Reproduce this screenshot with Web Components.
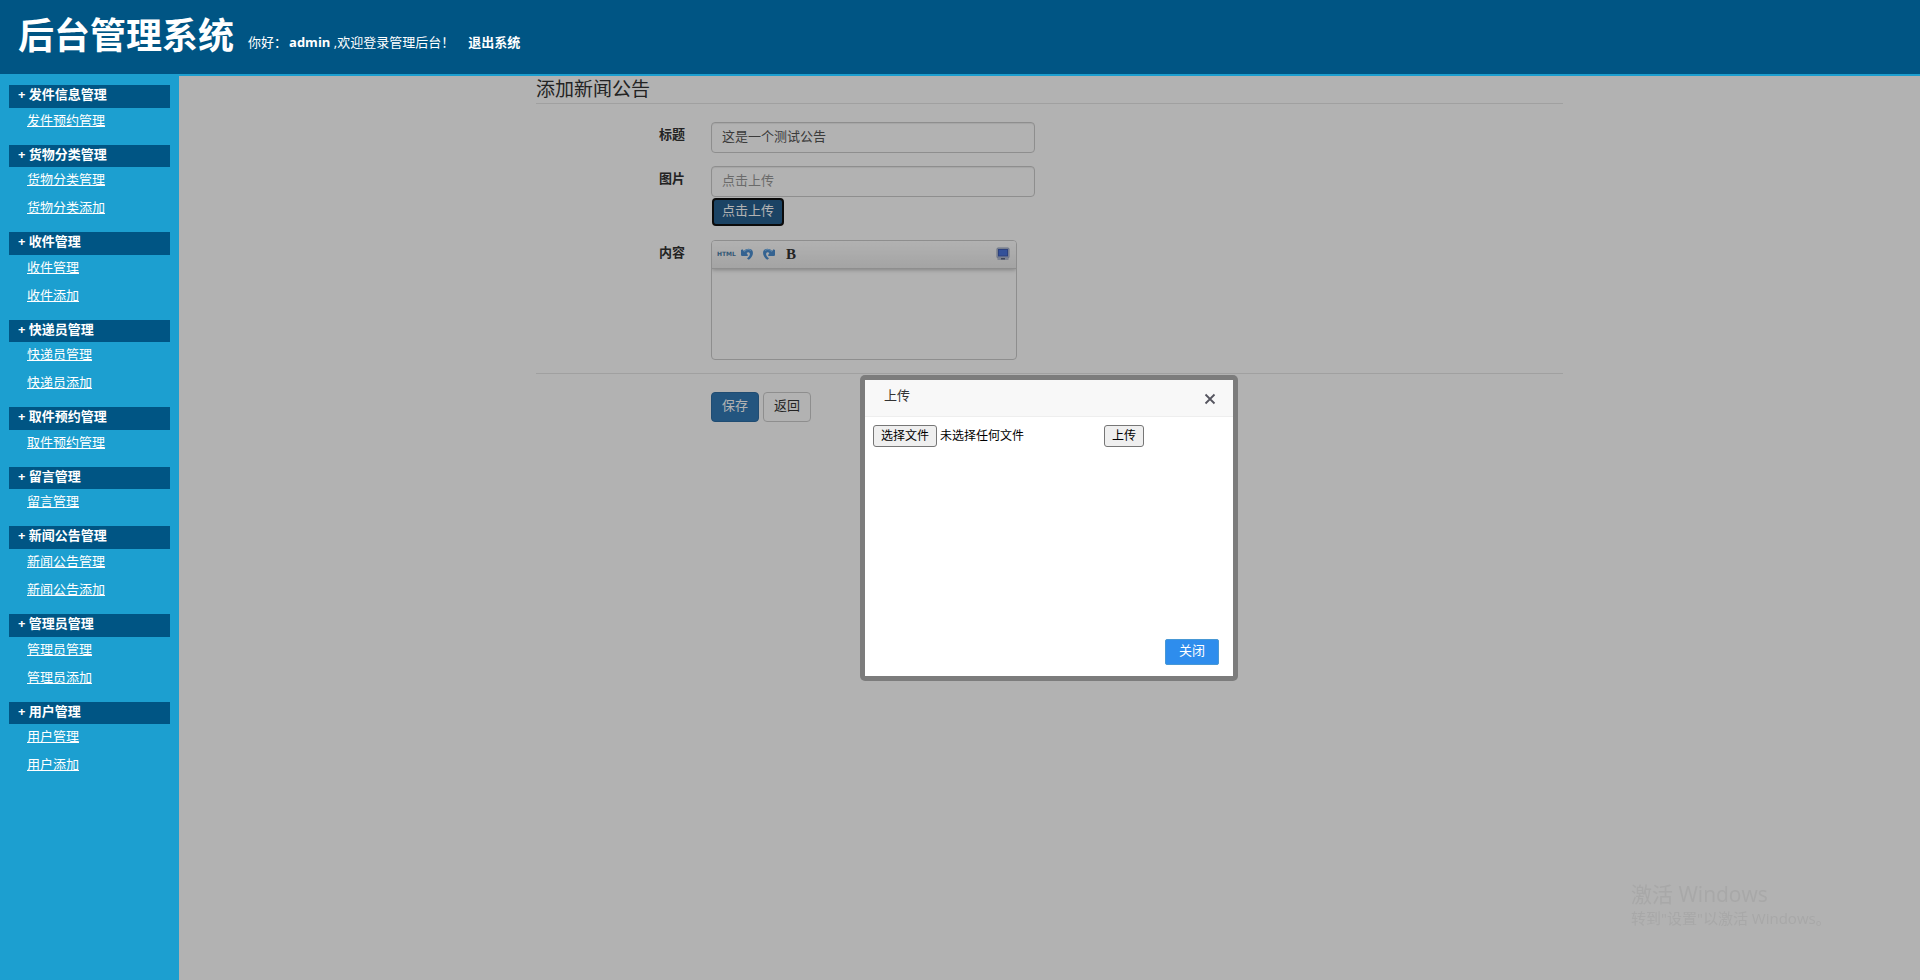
<!DOCTYPE html>
<html lang="zh-CN">
<head>
<meta charset="utf-8">
<title>后台管理系统</title>
<style>
  body {
    margin: 0;
    font-family: "Open Sans", "Noto Sans CJK SC", sans-serif;
    font-size: 13px;
    line-height: 1.43;
    color: #333;
  }
</style>
</head>
<body>
<admin-app></admin-app>

<script>
const define = (name, html, setup) => {
  const template = document.createElement("template");
  template.innerHTML = html;

  customElements.define(name, class extends HTMLElement {
    constructor() {
      super();
      this.attachShadow({ mode: "open" });
      this.shadowRoot.appendChild(template.content.cloneNode(true));
    }

    connectedCallback() {
      if (setup) setup(this, this.shadowRoot);
    }
  });
};

define("admin-header", `
  <style>
    :host {
      display: flex;
      align-items: center;
      height: 74px;
      padding: 0 18px;
      background: #005584;
      border-bottom: 2px solid #1c9fd0;
      color: #fff;
    }
    h1 {
      margin: 0 14px 2px 0;
      font-size: 36px;
      line-height: 72px;
    }
    p { margin: 10px 0 0; }
    b { margin-left: 2px; }
    a {
      margin-left: 14px;
      color: #fff;
      font-weight: bold;
      text-decoration: none;
    }
  </style>
  <h1>后台管理系统</h1>
  <p>你好：<b>admin</b> ,欢迎登录管理后台！<a href="#logout">退出系统</a></p>
`);

define("menu-group", `
  <style>
    :host {
      display: block;
      margin-bottom: 9px;
    }
    h2 {
      margin: 0;
      padding: 0 9px 4px;
      font-size: 13px;
      line-height: 1.43;
      background: #005584;
    }
    ::slotted(a) {
      display: block;
      padding: 0 0 4px 18px;
      line-height: 24px;
      color: #fff;
    }
  </style>
  <h2></h2>
  <slot></slot>
`, (el, root) => {
  root.querySelector("h2").textContent = "+ " + el.getAttribute("heading");
});

define("side-menu", `
  <style>
    :host {
      display: block;
      box-sizing: border-box;
      flex: 0 0 179px;
      padding: 9px;
      background: #1c9fd0;
      color: #fff;
    }
  </style>
  <nav></nav>
`, (el, root) => {
  const menu = {
    "发件信息管理": ["发件预约管理"],
    "货物分类管理": ["货物分类管理", "货物分类添加"],
    "收件管理": ["收件管理", "收件添加"],
    "快递员管理": ["快递员管理", "快递员添加"],
    "取件预约管理": ["取件预约管理"],
    "留言管理": ["留言管理"],
    "新闻公告管理": ["新闻公告管理", "新闻公告添加"],
    "管理员管理": ["管理员管理", "管理员添加"],
    "用户管理": ["用户管理", "用户添加"],
  };
  root.querySelector("nav").innerHTML = Object.entries(menu).map(([heading, links]) => `
    <menu-group heading="${heading}">
      ${links.map((text) => `<a href="#${text}">${text}</a>`).join("")}
    </menu-group>
  `).join("");
});

define("form-row", `
  <style>
    :host {
      display: grid;
      grid-template-columns: 175px 1fr;
      margin-bottom: 13px;
    }
    .label {
      padding: 3px 26px 0 0;
      text-align: right;
      font-weight: bold;
      line-height: 19px;
    }
  </style>
  <div class="label"><slot name="label"></slot></div>
  <div><slot></slot></div>
`);

define("text-editor", `
  <style>
    :host {
      display: flex;
      flex-direction: column;
      box-sizing: border-box;
      max-width: 306px;
      height: 120px;
      border: 1px solid #ccc;
      border-radius: 4px;
      overflow: hidden;
    }
    .toolbar {
      display: flex;
      align-items: center;
      gap: 6px;
      height: 25px;
      padding: 0 5px 2px;
      border-bottom: 1px solid #ccc;
      background: linear-gradient(#fff, #ebebeb);
      box-shadow: 0 1px 4px #bbb;
    }
    button {
      width: 16px;
      height: 16px;
      padding: 0;
      border: 0;
      background: none;
      line-height: 16px;
    }
    button:last-child { margin-left: auto; }
    svg { display: block; }
    .html {
      color: #4a7ea8;
      font: bold 6px/16px "DejaVu Sans", sans-serif;
    }
    .bold {
      color: #333;
      font: bold 15px/16px "Liberation Serif", serif;
    }
    textarea {
      flex: 1;
      padding: 6px;
      border: 0;
      outline: 0;
      background: none;
      resize: none;
      font: inherit;
    }
  </style>
  <div class="toolbar">
    <button class="html" type="button">HTML</button>
    <button type="button" aria-label="撤销">
      <svg width="16" height="16" viewBox="0 0 16 16">
        <path d="M2 4l1.500-.8 1.300 1.700C7 2.500 10 2.200 12 3.200c3.200 2 2.400 7.400-2.200 10.600L8 12.400c2.200-1.600 3.200-3.400 2.800-5-.5-1.400-1.800-1.600-3.200-.4L9 9.200 8.400 10H2.800L2 9.200z" fill="#4c8fd0"/>
        <path d="M5 5.600C7.500 3 10.500 3 12 4.600" fill="none" stroke="#84bdf0" stroke-width="1.200"/>
      </svg>
    </button>
    <button type="button" aria-label="重做">
      <svg width="16" height="16" viewBox="0 0 16 16">
        <g transform="matrix(-1 0 0 1 16 0)">
          <path d="M2 4l1.500-.8 1.300 1.700C7 2.500 10 2.200 12 3.200c3.200 2 2.400 7.400-2.200 10.600L8 12.400c2.200-1.600 3.200-3.400 2.800-5-.5-1.400-1.800-1.600-3.200-.4L9 9.200 8.400 10H2.800L2 9.200z" fill="#4c8fd0"/>
          <path d="M5 5.600C7.500 3 10.500 3 12 4.600" fill="none" stroke="#84bdf0" stroke-width="1.200"/>
        </g>
      </svg>
    </button>
    <button class="bold" type="button">B</button>
    <button type="button" aria-label="全屏">
      <svg width="16" height="16" viewBox="0 0 16 16">
        <rect x="2" y="2" width="12" height="10" rx="1" fill="#c3cadb" stroke="#93a0be"/>
        <rect x="3.500" y="3.500" width="9" height="6.500" fill="#4a74dc" stroke="#3f5db4"/>
        <path d="M2.500 12h11v2h-11z" fill="#b4bccf"/>
        <path d="M6 12h4v1.500H6z" fill="#5b6580"/>
      </svg>
    </button>
  </div>
  <textarea aria-label="内容"></textarea>
`);

define("news-form", `
  <style>
    :host {
      display: block;
      width: 59%;
      margin: 0 auto;
    }
    h2 {
      margin: 0 0 18px;
      border-bottom: 1px solid #e5e5e5;
      font-size: 19px;
      font-weight: normal;
      line-height: 27px;
    }
    input {
      display: block;
      box-sizing: border-box;
      width: 100%;
      max-width: 324px;
      height: 31px;
      padding: 0 10px 4px;
      border: 1px solid #ccc;
      border-radius: 4px;
      box-shadow: inset 0 1px 1px rgba(0, 0, 0, .075);
      color: #555;
      font: inherit;
    }
    input::placeholder { color: #999; }
    button {
      height: 30px;
      padding: 0 10px 4px;
      border: 1px solid #ccc;
      border-radius: 4px;
      background: #fff;
      color: #333;
      font: inherit;
    }
    .primary {
      border-color: #2e6da4;
      background: #337ab7;
      color: #fff;
    }
    .upload {
      display: block;
      height: 28px;
      margin: 1px;
      padding: 0 8px 4px;
      border: 2px solid #101010;
      background: #286090;
      box-shadow: 0 0 0 1px #fff;
      color: #fff;
    }
    .actions {
      display: flex;
      gap: 4px;
      padding: 18px 0 0 175px;
      border-top: 1px solid #e5e5e5;
    }
  </style>
  <form>
    <h2>添加新闻公告</h2>
    <form-row>
      <label slot="label" for="title">标题</label>
      <input id="title" type="text" value="这是一个测试公告">
    </form-row>
    <form-row>
      <label slot="label" for="picture">图片</label>
      <input id="picture" type="text" placeholder="点击上传">
      <button class="upload" type="button">点击上传</button>
    </form-row>
    <form-row>
      <label slot="label">内容</label>
      <text-editor></text-editor>
    </form-row>
    <div class="actions">
      <button class="primary" type="button">保存</button>
      <button type="button">返回</button>
    </div>
  </form>
`, (el, root) => {
  root.querySelector(".upload").addEventListener("click", () => {
    el.dispatchEvent(new CustomEvent("upload", { bubbles: true, composed: true }));
  });
});

define("upload-dialog", `
  <style>
    :host {
      position: absolute;
      inset: 0;
      display: grid;
      place-items: center;
      padding: 0 1px 1px 0;
      background: rgba(0, 0, 0, .3);
    }
    :host([hidden]) { display: none; }
    section {
      display: flex;
      flex-direction: column;
      width: 368px;
      height: 296px;
      border: 5px solid rgba(0, 0, 0, .3);
      border-radius: 5px;
      background: #fff;
      background-clip: padding-box;
    }
    header {
      display: flex;
      align-items: center;
      justify-content: space-between;
      height: 36px;
      padding: 0 17px 0 19px;
      border-bottom: 1px solid #eee;
      background: #f8f8f8;
    }
    h3 {
      margin: 0 0 4px;
      font-size: 13px;
      font-weight: normal;
    }
    button { font: inherit; }
    .cross {
      padding: 3px 0 0;
      border: 0;
      background: none;
    }
    svg { display: block; }
    form {
      display: flex;
      flex: 1;
      align-items: flex-start;
      padding: 8px;
      color: #000;
      font-size: 12px;
      line-height: 18px;
    }
    form button {
      height: 22px;
      padding: 0 7px;
      border: 1px solid #767676;
      border-radius: 3px;
      background: #efefef;
      color: #000;
    }
    .name {
      flex: 0 0 164px;
      padding: 2px 0 0 3px;
    }
    footer {
      display: flex;
      justify-content: flex-end;
      padding: 0 14px 11px;
    }
    .close {
      height: 26px;
      padding: 0 13px 2px;
      border: 1px solid #4898d5;
      border-radius: 2px;
      background: #2e8ded;
      color: #fff;
    }
  </style>
  <section role="dialog" aria-labelledby="heading">
    <header>
      <h3 id="heading">上传</h3>
      <button class="cross" type="button" aria-label="关闭">
        <svg width="12" height="12" viewBox="0 0 12 12">
          <path d="M1.500 1.500l9 9M10.500 1.500l-9 9" stroke="#55555f" stroke-width="1.800"/>
        </svg>
      </button>
    </header>
    <form>
      <input type="file" aria-label="选择文件" hidden>
      <button class="pick" type="button">选择文件</button>
      <span class="name">未选择任何文件</span>
      <button type="button">上传</button>
    </form>
    <footer><button class="close" type="button">关闭</button></footer>
  </section>
`, (el, root) => {
  const file = root.querySelector("input");
  const hide = () => { el.hidden = true; };
  root.querySelector(".pick").addEventListener("click", () => file.click());
  file.addEventListener("change", () => {
    root.querySelector(".name").textContent = file.files.length ? file.files[0].name : "未选择任何文件";
  });
  root.querySelector(".cross").addEventListener("click", hide);
  root.querySelector(".close").addEventListener("click", hide);
});

define("activation-note", `
  <style>
    :host {
      position: fixed;
      right: 93px;
      bottom: 51px;
      width: 196px;
      color: #a8a8a8;
      white-space: nowrap;
      pointer-events: none;
    }
    p { margin: 0; }
    .head { font-size: 21px; line-height: 26px; }
    .text { font-size: 15px; line-height: 22px; }
  </style>
  <p class="head">激活 Windows</p>
  <p class="text">转到"设置"以激活 Windows。</p>
`);

define("admin-app", `
  <style>
    :host {
      display: flex;
      flex-direction: column;
      min-height: 100vh;
    }
    .body {
      display: flex;
      flex: 1;
    }
    main {
      position: relative;
      flex: 1;
      background: #fff;
    }
  </style>
  <admin-header></admin-header>
  <div class="body">
    <side-menu></side-menu>
    <main>
      <news-form></news-form>
      <upload-dialog></upload-dialog>
    </main>
  </div>
  <activation-note></activation-note>
`, (el, root) => {
  root.addEventListener("upload", () => {
    root.querySelector("upload-dialog").hidden = false;
  });
});
</script>
</body>
</html>
